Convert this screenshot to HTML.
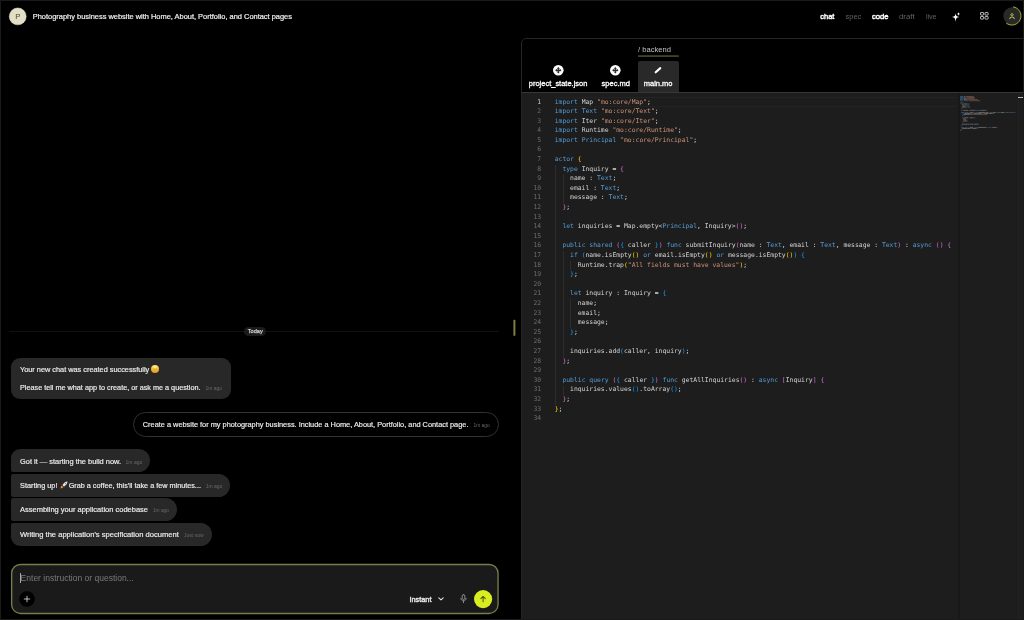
<!DOCTYPE html>
<html lang="en">
<head>
<meta charset="utf-8">
<title>Photography business website with Home, About, Portfolio, and Contact pages</title>
<style>
*{box-sizing:border-box;margin:0;padding:0}
html,body{width:1024px;height:620px;overflow:hidden;background:#000}
body{position:relative;font-family:"Liberation Sans",sans-serif;color:#fff;-webkit-font-smoothing:antialiased}
.frame{position:absolute;left:0;top:0;width:1024px;height:620px;border:1px solid #1b1b1b;pointer-events:none;z-index:50}
.root{position:absolute;left:0;top:0;width:1024px;height:620px;will-change:transform;opacity:.999}
.t{position:absolute;white-space:pre;line-height:0;height:20px}
.t i{display:inline-block;width:0;height:20px}
.m{-webkit-text-stroke:0.18px #ededed}
.abs{position:absolute}
.bub{position:absolute;background:#292929}
.panel{position:absolute;left:521px;top:38px;width:510px;height:590px;border:1px solid #272727;border-radius:5px 0 0 0;background:#000;overflow:hidden}
.editor{position:absolute;left:521px;top:92px;width:503px;height:528px;background:#1e1e1e;border-left:1px solid #242424;border-top:1px solid #383838}
.code,.gut{position:absolute;font-family:"DejaVu Sans Mono","Liberation Mono",monospace;font-size:6.4px;line-height:9.6px}
.code{left:554.7px;color:#d4d4d4}
.gut{left:521px;width:20.1px;text-align:right;color:#6e6e6e}
.gut .act{color:#c6c6c6}
.cl,.ln{height:9.6px;white-space:pre}
.k{color:#569cd6}.s{color:#ce9178}.b0{color:#ffd700}.b1{color:#da70d6}.b2{color:#179fff}
.mm{position:absolute}
svg{display:block;overflow:visible}
</style>
</head>
<body>
<div class="root">

<svg class="abs" style="left:0;top:0" width="40" height="40" viewBox="0 0 40 40"><circle cx="17.75" cy="16.4" r="8.45" fill="#e4e0c5" stroke="#ebe8d4" stroke-width="0.5"/></svg>
<div class="t" style="left:15.25px;top:-1.10px;font-size:7.794px;color:#4c4a40;"><i></i>P</div>
<div class="t" style="left:32.75px;top:-1.00px;font-size:7.452px;color:#f2f2f2;-webkit-text-stroke:0.2px #f2f2f2;"><i></i>Photography business website with Home, About, Portfolio, and Contact pages</div>
<div class="t" style="left:820.25px;top:-1.00px;font-size:7.484px;color:#fff;-webkit-text-stroke:0.45px #fff;"><i></i>chat</div>
<div class="t" style="left:845.60px;top:-1.00px;font-size:7.408px;color:#646464;"><i></i>spec</div>
<div class="t" style="left:871.90px;top:-1.00px;font-size:7.654px;color:#fff;-webkit-text-stroke:0.45px #fff;"><i></i>code</div>
<div class="t" style="left:899.00px;top:-1.00px;font-size:7.869px;color:#646464;"><i></i>draft</div>
<div class="t" style="left:925.90px;top:-1.00px;font-size:7.126px;color:#646464;"><i></i>live</div>
<svg class="abs" style="left:950px;top:11px" width="12" height="13" viewBox="0 0 24 26">
<path d="M11.2 4.6 C11.8 9.6 13 11.2 18.4 12 C13 12.8 11.8 14.4 11.2 22.4 C10.6 14.4 9.4 12.8 4 12 C9.4 11.2 10.6 9.6 11.2 4.6 Z" fill="#fff"/>
<path d="M17 2.2 C17.4 4.8 18 5.5 20.4 6 C18 6.5 17.4 7.2 17 9.8 C16.6 7.2 16 6.5 13.6 6 C16 5.5 16.6 4.8 17 2.2 Z" fill="#fff"/>
</svg>
<svg class="abs" style="left:979.7px;top:12.4px" width="8.6" height="7.6" viewBox="0 0 86 76" fill="none" stroke="#d0d0d0" stroke-width="9">
<rect x="5" y="5" width="31" height="26" rx="5"/><rect x="50" y="5" width="31" height="26" rx="5"/>
<rect x="5" y="45" width="31" height="26" rx="5"/><rect x="50" y="45" width="31" height="26" rx="5"/>
</svg>
<svg class="abs" style="left:1001.5px;top:6.3px" width="20" height="20" viewBox="0 0 40 40">
<circle cx="20" cy="20" r="17.4" fill="#2a2a2a"/>
<path d="M22 1.8 A18.2 18.2 0 1 1 8.5 34.2" fill="none" stroke="#a8b440" stroke-width="2"/>
<circle cx="20" cy="17.6" r="2.3" fill="none" stroke="#b3b846" stroke-width="2"/>
<path d="M15.6 25.2 C16.2 20.8 23.8 20.8 24.4 25.2" fill="none" stroke="#b3b846" stroke-width="2.2" stroke-linecap="round"/>
</svg>
<div class="panel"></div>
<div class="t" style="left:638.10px;top:31.60px;font-size:7.585px;color:#c4c4c4;"><i></i>/ backend</div>
<svg class="abs" style="left:630px;top:50px" width="60" height="10" viewBox="0 0 60 10"><rect x="8.1" y="5.5" width="40.7" height="1.1" fill="#707238"/></svg>
<div class="abs" style="left:638px;top:61.2px;width:40.8px;height:31px;background:#2a2a2a;border-radius:2px 2px 0 0"></div>
<svg class="abs" style="left:552.6px;top:64.60000000000001px" width="10.6" height="10.6" viewBox="0 0 24 24">
<circle cx="12" cy="12" r="12" fill="#fff"/>
<path d="M12 4.8 L15.4 8.6 H13.4 V10.6 H15.4 V8.6 L19.2 12 L15.4 15.4 V13.4 H13.4 V15.4 H15.4 L12 19.2 L8.6 15.4 H10.6 V13.4 H8.6 V15.4 L4.8 12 L8.6 8.6 V10.6 H10.6 V8.6 H8.6 Z" fill="#2a2a2a"/>
</svg>
<svg class="abs" style="left:610.3000000000001px;top:64.60000000000001px" width="10.6" height="10.6" viewBox="0 0 24 24">
<circle cx="12" cy="12" r="12" fill="#fff"/>
<path d="M12 4.8 L15.4 8.6 H13.4 V10.6 H15.4 V8.6 L19.2 12 L15.4 15.4 V13.4 H13.4 V15.4 H15.4 L12 19.2 L8.6 15.4 H10.6 V13.4 H8.6 V15.4 L4.8 12 L8.6 8.6 V10.6 H10.6 V8.6 H8.6 Z" fill="#2a2a2a"/>
</svg>
<svg class="abs" style="left:653px;top:65px" width="11" height="10" viewBox="0 0 22 20">
<path d="M5.4 14.6 L14.6 6.2" stroke="#fff" stroke-width="4.2" stroke-linecap="round"/>
</svg>
<div class="t" style="left:528.75px;top:66.25px;font-size:7.495px;color:#fff;-webkit-text-stroke:0.3px #fff;"><i></i>project_state.json</div>
<div class="t" style="left:601.50px;top:66.25px;font-size:7.540px;color:#fff;-webkit-text-stroke:0.3px #fff;"><i></i>spec.md</div>
<div class="t" style="left:643.75px;top:66.25px;font-size:7.495px;color:#fff;-webkit-text-stroke:0.3px #fff;"><i></i>main.mo</div>
<div class="editor"></div>
<div class="abs" style="left:555px;top:96.9px;width:402px;height:9.8px;border-top:1px solid #242424;border-bottom:1px solid #242424"></div>
<div class="abs" style="left:555.0px;top:164.70px;width:1px;height:240.00px;background:#383838;opacity:.6"></div>
<div class="abs" style="left:562.7px;top:174.30px;width:1px;height:28.80px;background:#383838;opacity:.6"></div>
<div class="abs" style="left:562.7px;top:251.10px;width:1px;height:105.60px;background:#383838;opacity:.6"></div>
<div class="abs" style="left:562.7px;top:385.50px;width:1px;height:9.60px;background:#383838;opacity:.6"></div>
<div class="abs" style="left:570.3px;top:260.70px;width:1px;height:9.60px;background:#383838;opacity:.6"></div>
<div class="abs" style="left:570.3px;top:299.10px;width:1px;height:28.80px;background:#383838;opacity:.6"></div>
<div class="gut" style="top:97.5px">
<div class="ln act">1</div>
<div class="ln">2</div>
<div class="ln">3</div>
<div class="ln">4</div>
<div class="ln">5</div>
<div class="ln">6</div>
<div class="ln">7</div>
<div class="ln">8</div>
<div class="ln">9</div>
<div class="ln">10</div>
<div class="ln">11</div>
<div class="ln">12</div>
<div class="ln">13</div>
<div class="ln">14</div>
<div class="ln">15</div>
<div class="ln">16</div>
<div class="ln">17</div>
<div class="ln">18</div>
<div class="ln">19</div>
<div class="ln">20</div>
<div class="ln">21</div>
<div class="ln">22</div>
<div class="ln">23</div>
<div class="ln">24</div>
<div class="ln">25</div>
<div class="ln">26</div>
<div class="ln">27</div>
<div class="ln">28</div>
<div class="ln">29</div>
<div class="ln">30</div>
<div class="ln">31</div>
<div class="ln">32</div>
<div class="ln">33</div>
<div class="ln">34</div>
</div>
<div class="code" style="top:97.5px">
<div class="cl"><span class="k">import</span> Map <span class="s">"mo:core/Map"</span>;</div>
<div class="cl"><span class="k">import</span> <span class="k">Text</span> <span class="s">"mo:core/Text"</span>;</div>
<div class="cl"><span class="k">import</span> Iter <span class="s">"mo:core/Iter"</span>;</div>
<div class="cl"><span class="k">import</span> Runtime <span class="s">"mo:core/Runtime"</span>;</div>
<div class="cl"><span class="k">import</span> <span class="k">Principal</span> <span class="s">"mo:core/Principal"</span>;</div>
<div class="cl"></div>
<div class="cl"><span class="k">actor</span> <span class="b0">{</span></div>
<div class="cl">  <span class="k">type</span> Inquiry = <span class="b1">{</span></div>
<div class="cl">    name : <span class="k">Text</span>;</div>
<div class="cl">    email : <span class="k">Text</span>;</div>
<div class="cl">    message : <span class="k">Text</span>;</div>
<div class="cl">  <span class="b1">}</span>;</div>
<div class="cl"></div>
<div class="cl">  <span class="k">let</span> inquiries = Map.empty&lt;<span class="k">Principal</span>, Inquiry&gt;<span class="b1">(</span><span class="b1">)</span>;</div>
<div class="cl"></div>
<div class="cl">  <span class="k">public</span> <span class="k">shared</span> <span class="b1">(</span><span class="b2">{</span> caller <span class="b2">}</span><span class="b1">)</span> <span class="k">func</span> submitInquiry<span class="b1">(</span>name : <span class="k">Text</span>, email : <span class="k">Text</span>, message : <span class="k">Text</span><span class="b1">)</span> : <span class="k">async</span> <span class="b1">(</span><span class="b1">)</span> <span class="b1">{</span></div>
<div class="cl">    <span class="k">if</span> <span class="b2">(</span>name.isEmpty<span class="b0">(</span><span class="b0">)</span> <span class="k">or</span> email.isEmpty<span class="b0">(</span><span class="b0">)</span> <span class="k">or</span> message.isEmpty<span class="b0">(</span><span class="b0">)</span><span class="b2">)</span> <span class="b2">{</span></div>
<div class="cl">      Runtime.trap<span class="b0">(</span><span class="s">"All fields must have values"</span><span class="b0">)</span>;</div>
<div class="cl">    <span class="b2">}</span>;</div>
<div class="cl"></div>
<div class="cl">    <span class="k">let</span> inquiry : Inquiry = <span class="b2">{</span></div>
<div class="cl">      name;</div>
<div class="cl">      email;</div>
<div class="cl">      message;</div>
<div class="cl">    <span class="b2">}</span>;</div>
<div class="cl"></div>
<div class="cl">    inquiries.add<span class="b2">(</span>caller, inquiry<span class="b2">)</span>;</div>
<div class="cl">  <span class="b1">}</span>;</div>
<div class="cl"></div>
<div class="cl">  <span class="k">public</span> <span class="k">query</span> <span class="b1">(</span><span class="b2">{</span> caller <span class="b2">}</span><span class="b1">)</span> <span class="k">func</span> getAllInquiries<span class="b1">(</span><span class="b1">)</span> : <span class="k">async</span> <span class="b1">[</span>Inquiry<span class="b1">]</span> <span class="b1">{</span></div>
<div class="cl">    inquiries.values<span class="b2">(</span><span class="b2">)</span>.toArray<span class="b2">(</span><span class="b2">)</span>;</div>
<div class="cl">  <span class="b1">}</span>;</div>
<div class="cl"><span class="b0">}</span>;</div>
<div class="cl"></div>
</div>
<div class="abs" style="left:956.5px;top:93px;width:3px;height:527px;background:linear-gradient(90deg,rgba(22,22,22,0),#171717)"></div>
<svg class="mm" style="left:960.0px;top:96.3px" width="60" height="40" viewBox="0 0 60 40" opacity="0.4"><rect x="0.00" y="0.00" width="3.24" height="0.9" fill="#569cd6"/><rect x="3.78" y="0.00" width="1.62" height="0.9" fill="#d4d4d4"/><rect x="5.94" y="0.00" width="7.02" height="0.9" fill="#ce9178"/><rect x="12.96" y="0.00" width="0.54" height="0.9" fill="#d4d4d4"/><rect x="0.00" y="1.07" width="3.24" height="0.9" fill="#569cd6"/><rect x="3.78" y="1.07" width="2.16" height="0.9" fill="#569cd6"/><rect x="6.48" y="1.07" width="7.56" height="0.9" fill="#ce9178"/><rect x="14.04" y="1.07" width="0.54" height="0.9" fill="#d4d4d4"/><rect x="0.00" y="2.13" width="3.24" height="0.9" fill="#569cd6"/><rect x="3.78" y="2.13" width="2.16" height="0.9" fill="#d4d4d4"/><rect x="6.48" y="2.13" width="7.56" height="0.9" fill="#ce9178"/><rect x="14.04" y="2.13" width="0.54" height="0.9" fill="#d4d4d4"/><rect x="0.00" y="3.20" width="3.24" height="0.9" fill="#569cd6"/><rect x="3.78" y="3.20" width="3.78" height="0.9" fill="#d4d4d4"/><rect x="8.10" y="3.20" width="9.18" height="0.9" fill="#ce9178"/><rect x="17.28" y="3.20" width="0.54" height="0.9" fill="#d4d4d4"/><rect x="0.00" y="4.27" width="3.24" height="0.9" fill="#569cd6"/><rect x="3.78" y="4.27" width="4.86" height="0.9" fill="#569cd6"/><rect x="9.18" y="4.27" width="10.26" height="0.9" fill="#ce9178"/><rect x="19.44" y="4.27" width="0.54" height="0.9" fill="#d4d4d4"/><rect x="0.00" y="6.40" width="2.70" height="0.9" fill="#569cd6"/><rect x="3.24" y="6.40" width="0.54" height="0.9" fill="#ffd700"/><rect x="1.08" y="7.47" width="2.16" height="0.9" fill="#569cd6"/><rect x="3.78" y="7.47" width="3.78" height="0.9" fill="#d4d4d4"/><rect x="8.10" y="7.47" width="0.54" height="0.9" fill="#d4d4d4"/><rect x="9.18" y="7.47" width="0.54" height="0.9" fill="#da70d6"/><rect x="2.16" y="8.54" width="2.16" height="0.9" fill="#d4d4d4"/><rect x="4.86" y="8.54" width="0.54" height="0.9" fill="#d4d4d4"/><rect x="5.94" y="8.54" width="2.16" height="0.9" fill="#569cd6"/><rect x="8.10" y="8.54" width="0.54" height="0.9" fill="#d4d4d4"/><rect x="2.16" y="9.60" width="2.70" height="0.9" fill="#d4d4d4"/><rect x="5.40" y="9.60" width="0.54" height="0.9" fill="#d4d4d4"/><rect x="6.48" y="9.60" width="2.16" height="0.9" fill="#569cd6"/><rect x="8.64" y="9.60" width="0.54" height="0.9" fill="#d4d4d4"/><rect x="2.16" y="10.67" width="3.78" height="0.9" fill="#d4d4d4"/><rect x="6.48" y="10.67" width="0.54" height="0.9" fill="#d4d4d4"/><rect x="7.56" y="10.67" width="2.16" height="0.9" fill="#569cd6"/><rect x="9.72" y="10.67" width="0.54" height="0.9" fill="#d4d4d4"/><rect x="1.08" y="11.74" width="0.54" height="0.9" fill="#da70d6"/><rect x="1.62" y="11.74" width="0.54" height="0.9" fill="#d4d4d4"/><rect x="1.08" y="13.87" width="1.62" height="0.9" fill="#569cd6"/><rect x="3.24" y="13.87" width="4.86" height="0.9" fill="#d4d4d4"/><rect x="8.64" y="13.87" width="0.54" height="0.9" fill="#d4d4d4"/><rect x="9.72" y="13.87" width="1.62" height="0.9" fill="#d4d4d4"/><rect x="11.34" y="13.87" width="0.54" height="0.9" fill="#d4d4d4"/><rect x="11.88" y="13.87" width="2.70" height="0.9" fill="#d4d4d4"/><rect x="14.58" y="13.87" width="0.54" height="0.9" fill="#d4d4d4"/><rect x="15.12" y="13.87" width="4.86" height="0.9" fill="#569cd6"/><rect x="19.98" y="13.87" width="0.54" height="0.9" fill="#d4d4d4"/><rect x="21.06" y="13.87" width="3.78" height="0.9" fill="#d4d4d4"/><rect x="24.84" y="13.87" width="0.54" height="0.9" fill="#d4d4d4"/><rect x="25.38" y="13.87" width="0.54" height="0.9" fill="#da70d6"/><rect x="25.92" y="13.87" width="0.54" height="0.9" fill="#da70d6"/><rect x="26.46" y="13.87" width="0.54" height="0.9" fill="#d4d4d4"/><rect x="1.08" y="16.00" width="3.24" height="0.9" fill="#569cd6"/><rect x="4.86" y="16.00" width="3.24" height="0.9" fill="#569cd6"/><rect x="8.64" y="16.00" width="0.54" height="0.9" fill="#da70d6"/><rect x="9.18" y="16.00" width="0.54" height="0.9" fill="#179fff"/><rect x="10.26" y="16.00" width="3.24" height="0.9" fill="#d4d4d4"/><rect x="14.04" y="16.00" width="0.54" height="0.9" fill="#179fff"/><rect x="14.58" y="16.00" width="0.54" height="0.9" fill="#da70d6"/><rect x="15.66" y="16.00" width="2.16" height="0.9" fill="#569cd6"/><rect x="18.36" y="16.00" width="7.02" height="0.9" fill="#d4d4d4"/><rect x="25.38" y="16.00" width="0.54" height="0.9" fill="#da70d6"/><rect x="25.92" y="16.00" width="2.16" height="0.9" fill="#d4d4d4"/><rect x="28.62" y="16.00" width="0.54" height="0.9" fill="#d4d4d4"/><rect x="29.70" y="16.00" width="2.16" height="0.9" fill="#569cd6"/><rect x="31.86" y="16.00" width="0.54" height="0.9" fill="#d4d4d4"/><rect x="32.94" y="16.00" width="2.70" height="0.9" fill="#d4d4d4"/><rect x="36.18" y="16.00" width="0.54" height="0.9" fill="#d4d4d4"/><rect x="37.26" y="16.00" width="2.16" height="0.9" fill="#569cd6"/><rect x="39.42" y="16.00" width="0.54" height="0.9" fill="#d4d4d4"/><rect x="40.50" y="16.00" width="3.78" height="0.9" fill="#d4d4d4"/><rect x="44.82" y="16.00" width="0.54" height="0.9" fill="#d4d4d4"/><rect x="45.90" y="16.00" width="2.16" height="0.9" fill="#569cd6"/><rect x="48.06" y="16.00" width="0.54" height="0.9" fill="#da70d6"/><rect x="49.14" y="16.00" width="0.54" height="0.9" fill="#d4d4d4"/><rect x="50.22" y="16.00" width="2.70" height="0.9" fill="#569cd6"/><rect x="53.46" y="16.00" width="0.54" height="0.9" fill="#da70d6"/><rect x="54.00" y="16.00" width="0.54" height="0.9" fill="#da70d6"/><rect x="55.08" y="16.00" width="0.54" height="0.9" fill="#da70d6"/><rect x="2.16" y="17.07" width="1.08" height="0.9" fill="#569cd6"/><rect x="3.78" y="17.07" width="0.54" height="0.9" fill="#179fff"/><rect x="4.32" y="17.07" width="2.16" height="0.9" fill="#d4d4d4"/><rect x="6.48" y="17.07" width="0.54" height="0.9" fill="#d4d4d4"/><rect x="7.02" y="17.07" width="3.78" height="0.9" fill="#d4d4d4"/><rect x="10.80" y="17.07" width="0.54" height="0.9" fill="#ffd700"/><rect x="11.34" y="17.07" width="0.54" height="0.9" fill="#ffd700"/><rect x="12.42" y="17.07" width="1.08" height="0.9" fill="#569cd6"/><rect x="14.04" y="17.07" width="2.70" height="0.9" fill="#d4d4d4"/><rect x="16.74" y="17.07" width="0.54" height="0.9" fill="#d4d4d4"/><rect x="17.28" y="17.07" width="3.78" height="0.9" fill="#d4d4d4"/><rect x="21.06" y="17.07" width="0.54" height="0.9" fill="#ffd700"/><rect x="21.60" y="17.07" width="0.54" height="0.9" fill="#ffd700"/><rect x="22.68" y="17.07" width="1.08" height="0.9" fill="#569cd6"/><rect x="24.30" y="17.07" width="3.78" height="0.9" fill="#d4d4d4"/><rect x="28.08" y="17.07" width="0.54" height="0.9" fill="#d4d4d4"/><rect x="28.62" y="17.07" width="3.78" height="0.9" fill="#d4d4d4"/><rect x="32.40" y="17.07" width="0.54" height="0.9" fill="#ffd700"/><rect x="32.94" y="17.07" width="0.54" height="0.9" fill="#ffd700"/><rect x="33.48" y="17.07" width="0.54" height="0.9" fill="#179fff"/><rect x="34.56" y="17.07" width="0.54" height="0.9" fill="#179fff"/><rect x="3.24" y="18.14" width="3.78" height="0.9" fill="#d4d4d4"/><rect x="7.02" y="18.14" width="0.54" height="0.9" fill="#d4d4d4"/><rect x="7.56" y="18.14" width="2.16" height="0.9" fill="#d4d4d4"/><rect x="9.72" y="18.14" width="0.54" height="0.9" fill="#ffd700"/><rect x="10.26" y="18.14" width="15.66" height="0.9" fill="#ce9178"/><rect x="25.92" y="18.14" width="0.54" height="0.9" fill="#ffd700"/><rect x="26.46" y="18.14" width="0.54" height="0.9" fill="#d4d4d4"/><rect x="2.16" y="19.21" width="0.54" height="0.9" fill="#179fff"/><rect x="2.70" y="19.21" width="0.54" height="0.9" fill="#d4d4d4"/><rect x="2.16" y="21.34" width="1.62" height="0.9" fill="#569cd6"/><rect x="4.32" y="21.34" width="3.78" height="0.9" fill="#d4d4d4"/><rect x="8.64" y="21.34" width="0.54" height="0.9" fill="#d4d4d4"/><rect x="9.72" y="21.34" width="3.78" height="0.9" fill="#d4d4d4"/><rect x="14.04" y="21.34" width="0.54" height="0.9" fill="#d4d4d4"/><rect x="15.12" y="21.34" width="0.54" height="0.9" fill="#179fff"/><rect x="3.24" y="22.41" width="2.16" height="0.9" fill="#d4d4d4"/><rect x="5.40" y="22.41" width="0.54" height="0.9" fill="#d4d4d4"/><rect x="3.24" y="23.47" width="2.70" height="0.9" fill="#d4d4d4"/><rect x="5.94" y="23.47" width="0.54" height="0.9" fill="#d4d4d4"/><rect x="3.24" y="24.54" width="3.78" height="0.9" fill="#d4d4d4"/><rect x="7.02" y="24.54" width="0.54" height="0.9" fill="#d4d4d4"/><rect x="2.16" y="25.61" width="0.54" height="0.9" fill="#179fff"/><rect x="2.70" y="25.61" width="0.54" height="0.9" fill="#d4d4d4"/><rect x="2.16" y="27.74" width="4.86" height="0.9" fill="#d4d4d4"/><rect x="7.02" y="27.74" width="0.54" height="0.9" fill="#d4d4d4"/><rect x="7.56" y="27.74" width="1.62" height="0.9" fill="#d4d4d4"/><rect x="9.18" y="27.74" width="0.54" height="0.9" fill="#179fff"/><rect x="9.72" y="27.74" width="3.24" height="0.9" fill="#d4d4d4"/><rect x="12.96" y="27.74" width="0.54" height="0.9" fill="#d4d4d4"/><rect x="14.04" y="27.74" width="3.78" height="0.9" fill="#d4d4d4"/><rect x="17.82" y="27.74" width="0.54" height="0.9" fill="#179fff"/><rect x="18.36" y="27.74" width="0.54" height="0.9" fill="#d4d4d4"/><rect x="1.08" y="28.81" width="0.54" height="0.9" fill="#da70d6"/><rect x="1.62" y="28.81" width="0.54" height="0.9" fill="#d4d4d4"/><rect x="1.08" y="30.94" width="3.24" height="0.9" fill="#569cd6"/><rect x="4.86" y="30.94" width="2.70" height="0.9" fill="#569cd6"/><rect x="8.10" y="30.94" width="0.54" height="0.9" fill="#da70d6"/><rect x="8.64" y="30.94" width="0.54" height="0.9" fill="#179fff"/><rect x="9.72" y="30.94" width="3.24" height="0.9" fill="#d4d4d4"/><rect x="13.50" y="30.94" width="0.54" height="0.9" fill="#179fff"/><rect x="14.04" y="30.94" width="0.54" height="0.9" fill="#da70d6"/><rect x="15.12" y="30.94" width="2.16" height="0.9" fill="#569cd6"/><rect x="17.82" y="30.94" width="8.10" height="0.9" fill="#d4d4d4"/><rect x="25.92" y="30.94" width="0.54" height="0.9" fill="#da70d6"/><rect x="26.46" y="30.94" width="0.54" height="0.9" fill="#da70d6"/><rect x="27.54" y="30.94" width="0.54" height="0.9" fill="#d4d4d4"/><rect x="28.62" y="30.94" width="2.70" height="0.9" fill="#569cd6"/><rect x="31.86" y="30.94" width="0.54" height="0.9" fill="#da70d6"/><rect x="32.40" y="30.94" width="3.78" height="0.9" fill="#d4d4d4"/><rect x="36.18" y="30.94" width="0.54" height="0.9" fill="#da70d6"/><rect x="37.26" y="30.94" width="0.54" height="0.9" fill="#da70d6"/><rect x="2.16" y="32.01" width="4.86" height="0.9" fill="#d4d4d4"/><rect x="7.02" y="32.01" width="0.54" height="0.9" fill="#d4d4d4"/><rect x="7.56" y="32.01" width="3.24" height="0.9" fill="#d4d4d4"/><rect x="10.80" y="32.01" width="0.54" height="0.9" fill="#179fff"/><rect x="11.34" y="32.01" width="0.54" height="0.9" fill="#179fff"/><rect x="11.88" y="32.01" width="0.54" height="0.9" fill="#d4d4d4"/><rect x="12.42" y="32.01" width="3.78" height="0.9" fill="#d4d4d4"/><rect x="16.20" y="32.01" width="0.54" height="0.9" fill="#179fff"/><rect x="16.74" y="32.01" width="0.54" height="0.9" fill="#179fff"/><rect x="17.28" y="32.01" width="0.54" height="0.9" fill="#d4d4d4"/><rect x="1.08" y="33.08" width="0.54" height="0.9" fill="#da70d6"/><rect x="1.62" y="33.08" width="0.54" height="0.9" fill="#d4d4d4"/><rect x="0.00" y="34.14" width="0.54" height="0.9" fill="#ffd700"/><rect x="0.54" y="34.14" width="0.54" height="0.9" fill="#d4d4d4"/></svg>
<div class="abs" style="left:1018px;top:93px;width:1px;height:527px;background:#242424"></div>
<div class="abs" style="left:1018px;top:97.2px;width:6px;height:1px;background:#bdbdbd"></div>
<svg class="abs" style="left:500px;top:310px" width="30" height="40" viewBox="0 0 30 40"><rect x="13.4" y="9.8" width="2" height="16.1" rx="0.8" fill="#7d7f46"/></svg>
<div class="abs" style="left:9px;top:331px;width:490px;height:1px;background:#121212"></div>
<div class="abs" style="left:243.5px;top:326.8px;width:22.8px;height:9.2px;border-radius:4.6px;background:#1c1c1c"></div>
<div class="t" style="left:247.80px;top:313.40px;font-size:5.583px;color:#d0d0d0;-webkit-text-stroke:0.25px #d0d0d0;"><i></i>Today</div>
<div class="bub" style="left:11.3px;top:357.7px;width:219.30px;height:41.30px;border-radius:9px"></div>
<div class="t m" style="left:20.00px;top:351.90px;font-size:7.330px;color:#ededed;"><i></i>Your new chat was created successfully</div>
<svg class="abs" style="left:151.1px;top:365.4px" width="8" height="8" viewBox="0 0 20 20">
<defs><radialGradient id="g1" cx="50%" cy="22%" r="85%"><stop offset="0" stop-color="#fff4ae"/><stop offset="0.5" stop-color="#f7c63c"/><stop offset="1" stop-color="#d98a14"/></radialGradient></defs>
<circle cx="10" cy="10" r="10" fill="url(#g1)"/>
<path d="M6 11.8 Q10 15.4 14 11.8" fill="none" stroke="#c07a10" stroke-width="1.4" stroke-linecap="round"/>
<path d="M5.4 8.6 Q6.8 7 8.2 8.6 M11.8 8.6 Q13.2 7 14.6 8.6" fill="none" stroke="#c07a10" stroke-width="1.2" stroke-linecap="round"/>
<ellipse cx="5.2" cy="11.4" rx="1.8" ry="1.1" fill="#f09a3a" opacity=".7"/><ellipse cx="14.8" cy="11.4" rx="1.8" ry="1.1" fill="#f09a3a" opacity=".7"/>
</svg>
<div class="t m" style="left:20.00px;top:369.70px;font-size:7.264px;color:#ededed;"><i></i>Please tell me what app to create, or ask me a question.</div>
<div class="t" style="left:205.40px;top:369.70px;font-size:5.036px;color:#6a6a6a;"><i></i>1m ago</div>
<div class="abs" style="left:133.4px;top:411.9px;width:365.6px;height:25px;border:1px solid #333;border-radius:12.5px"></div>
<div class="t m" style="left:142.80px;top:406.80px;font-size:7.365px;color:#ededed;"><i></i>Create a website for my photography business. Include a Home, About, Portfolio, and Contact page.</div>
<div class="t" style="left:473.50px;top:406.80px;font-size:4.856px;color:#6a6a6a;"><i></i>1m ago</div>
<div class="bub" style="left:11.3px;top:449.4px;width:139.20px;height:23.00px;border-radius:9px 11.5px 11.5px 2px"></div>
<div class="t m" style="left:20.00px;top:443.90px;font-size:7.438px;color:#ededed;"><i></i>Got it — starting the build now.</div>
<div class="t" style="left:125.60px;top:443.90px;font-size:5.006px;color:#6a6a6a;"><i></i>1m ago</div>
<div class="bub" style="left:11.3px;top:473.9px;width:219.10px;height:23.00px;border-radius:2px 11.5px 11.5px 2px"></div>
<div class="t m" style="left:20.00px;top:468.00px;font-size:7.330px;color:#ededed;"><i></i>Starting up!</div>
<svg class="abs" style="left:59.6px;top:481.2px" width="8" height="8" viewBox="0 0 16 16">
<path d="M15 1 C10.5 1 7 4 5.2 8.6 L7.4 10.8 C12 9 15 5.5 15 1 Z" fill="#ebe6e2"/>
<path d="M5.2 8.6 L2.2 8.4 L5.6 5 Z M7.4 10.8 L7.6 13.8 L11 10.4 Z" fill="#c0392b"/>
<path d="M5.4 10.6 L1 15 L2.4 10.2 Z M5.4 10.6 L1 15 L5.8 13.6 Z" fill="#f39a2b"/>
<circle cx="11" cy="5" r="1.3" fill="#5a8fc9"/>
</svg>
<div class="t m" style="left:68.70px;top:468.00px;font-size:7.260px;color:#ededed;"><i></i>Grab a coffee, this'll take a few minutes...</div>
<div class="t" style="left:205.80px;top:468.00px;font-size:4.976px;color:#6a6a6a;"><i></i>1m ago</div>
<div class="bub" style="left:11.3px;top:498.3px;width:166.20px;height:23.00px;border-radius:2px 11.5px 11.5px 2px"></div>
<div class="t m" style="left:20.00px;top:492.30px;font-size:7.511px;color:#ededed;"><i></i>Assembling your application codebase</div>
<div class="t" style="left:152.90px;top:492.30px;font-size:4.826px;color:#6a6a6a;"><i></i>1m ago</div>
<div class="bub" style="left:11.3px;top:522.8px;width:200.80px;height:23.00px;border-radius:2px 11.5px 11.5px 9px"></div>
<div class="t m" style="left:20.00px;top:516.80px;font-size:7.580px;color:#ededed;"><i></i>Writing the application's specification document</div>
<div class="t" style="left:183.90px;top:516.80px;font-size:4.966px;color:#6a6a6a;"><i></i>Just now</div>
<svg class="abs" style="left:0;top:0" width="512" height="620" viewBox="0 0 512 620"><rect x="11.65" y="564.45" width="486.4" height="49" rx="8.8" fill="#1b1b1b" stroke="#7b7e49" stroke-width="1.35"/></svg>
<div class="abs" style="left:20.2px;top:573.4px;width:0.8px;height:9.4px;background:#aaa"></div>
<div class="t" style="left:20.60px;top:560.60px;font-size:8.535px;color:#7a7a7a;"><i></i>Enter instruction or question...</div>
<svg class="abs" style="left:19px;top:590.6px" width="16" height="16" viewBox="0 0 32 32">
<circle cx="16" cy="16" r="15.5" fill="#000"/>
<path d="M16 10.5 V21.5 M10.5 16 H21.5" stroke="#f0f0f0" stroke-width="1.5" stroke-linecap="round"/>
</svg>
<div class="t" style="left:409.40px;top:581.60px;font-size:7.359px;color:#e8e8e8;-webkit-text-stroke:0.4px #e8e8e8;"><i></i>Instant</div>
<svg class="abs" style="left:437.8px;top:596.5px" width="6" height="3.8" viewBox="0 0 15 9.5">
<path d="M2 2 L7.5 7.4 L13 2" fill="none" stroke="#e0e0e0" stroke-width="2.7" stroke-linecap="round" stroke-linejoin="round"/>
</svg>
<svg class="abs" style="left:460.4px;top:594px" width="7" height="9.4" viewBox="0 0 14 19" fill="none" stroke="#9a9a9a" stroke-width="1.8" stroke-linecap="round">
<rect x="4.4" y="1.2" width="5.2" height="10" rx="2.6"/>
<path d="M1.6 8.8 C1.6 15.6 12.4 15.6 12.4 8.8 M7 14 V17.6"/>
</svg>
<svg class="abs" style="left:474.3px;top:589.5px" width="18.2" height="18.2" viewBox="0 0 36 36">
<circle cx="18" cy="18" r="18" fill="#d9ef22"/>
<path d="M18 23.4 V13 M13.6 17.2 L18 12.8 L22.4 17.2" fill="none" stroke="#4d5512" stroke-width="2" stroke-linecap="round" stroke-linejoin="round"/>
</svg>
<div class="frame"></div>
</div>
</body>
</html>
